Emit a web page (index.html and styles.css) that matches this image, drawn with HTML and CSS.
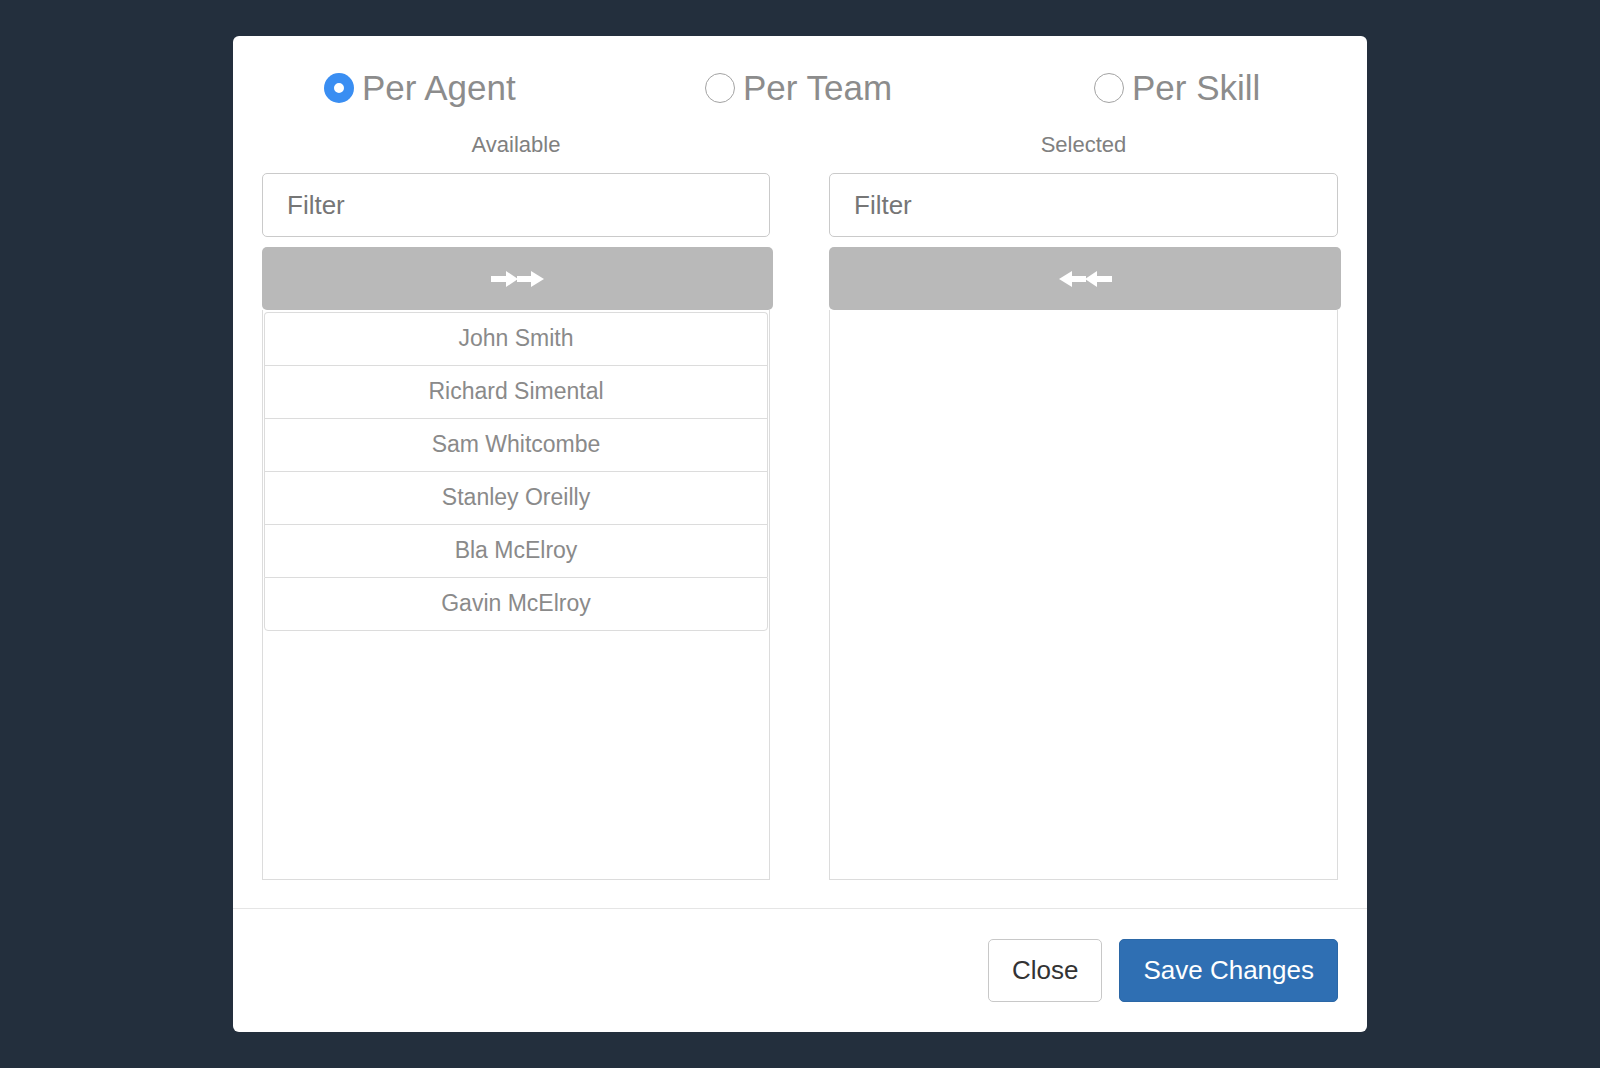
FILE: index.html
```html
<!DOCTYPE html>
<html lang="en">
<head>
    <meta charset="UTF-8">
    <meta name="viewport" content="width=device-width, initial-scale=1.0">
    <title>Assign Agents</title>
    <link rel="stylesheet" href="styles.css">
</head>
<body>
    <div class="modal">
        <div class="modal-body">
            <div class="mode-picker">
                <label class="mode">
                    <input type="radio" name="mode" value="agent" checked>
                    <span>Per Agent</span>
                </label>
                <label class="mode">
                    <input type="radio" name="mode" value="team">
                    <span>Per Team</span>
                </label>
                <label class="mode">
                    <input type="radio" name="mode" value="skill">
                    <span>Per Skill</span>
                </label>
            </div>

            <div class="dual-list">
                <div class="list-col">
                    <div class="list-title">Available</div>
                    <input type="text" class="filter" placeholder="Filter">
                    <button type="button" class="move-btn" title="Move all">
                        <svg width="54" height="18" viewBox="0 0 54 18" fill="#fff">
                            <rect x="0" y="6" width="18" height="6"/>
                            <polygon points="15,1 27,9 15,17"/>
                            <rect x="26" y="6" width="16" height="6"/>
                            <polygon points="40,1 53,9 40,17"/>
                        </svg>
                    </button>
                    <div class="list-box">
                        <ul class="list-group">
                            <li>John Smith</li>
                            <li>Richard Simental</li>
                            <li>Sam Whitcombe</li>
                            <li>Stanley Oreilly</li>
                            <li>Bla McElroy</li>
                            <li>Gavin McElroy</li>
                        </ul>
                    </div>
                </div>

                <div class="list-col">
                    <div class="list-title">Selected</div>
                    <input type="text" class="filter" placeholder="Filter">
                    <button type="button" class="move-btn" title="Remove all">
                        <svg width="54" height="18" viewBox="0 0 54 18" fill="#fff">
                            <polygon points="1,9 14,1 14,17"/>
                            <rect x="12" y="6" width="16" height="6"/>
                            <polygon points="27,9 39,1 39,17"/>
                            <rect x="36" y="6" width="18" height="6"/>
                        </svg>
                    </button>
                    <div class="list-box">
                        <ul class="list-group"></ul>
                    </div>
                </div>
            </div>
        </div>

        <div class="modal-footer">
            <button type="button" class="btn btn-default">Close</button>
            <button type="button" class="btn btn-primary">Save Changes</button>
        </div>
    </div>
</body>
</html>
```

FILE: styles.css
```css
* {
    margin: 0;
    padding: 0;
    box-sizing: border-box;
}

body {
    font-family: 'Liberation Sans', Arial, Helvetica, sans-serif;
    background: #232f3d;
    min-height: 100vh;
    padding: 36px 0 0 233px;
}

.modal {
    width: 1134px;
    height: 996px;
    background: #fff;
    border-radius: 6px;
    display: flex;
    flex-direction: column;
}

.modal-body {
    padding: 32px 29px 28px;
}

/* radio row */
.mode-picker {
    display: grid;
    grid-template-columns: 381px 389px auto;
    padding-left: 62px;
    height: 40px;
    align-items: center;
}

.mode {
    display: flex;
    align-items: center;
    gap: 8px;
    font-size: 35px;
    line-height: 40px;
    color: #8c8c8c;
    cursor: pointer;
}

.mode input {
    appearance: none;
    -webkit-appearance: none;
    width: 30px;
    height: 30px;
    border-radius: 50%;
    border: 1.5px solid #a3a3a3;
    background: #fff;
    margin: 0;
}

.mode input:checked {
    border: none;
    box-shadow: inset 0 0 0 10px #3a8ef2;
}

/* two lists */
.dual-list {
    display: grid;
    grid-template-columns: 508px 509px;
    justify-content: space-between;
    margin-top: 24px;
}

.list-title {
    text-align: center;
    font-size: 22px;
    line-height: 26px;
    color: #808080;
    margin-bottom: 15px;
}

.filter {
    display: block;
    width: 100%;
    height: 64px;
    padding: 0 24px;
    border: 1px solid #cacaca;
    border-radius: 5px;
    font-family: inherit;
    font-size: 26px;
    color: #555;
    outline: none;
}

.filter::placeholder {
    color: #767676;
}

.move-btn {
    display: flex;
    align-items: center;
    justify-content: center;
    width: calc(100% + 3px);
    height: 63px;
    margin-top: 10px;
    background: #b9b9b9;
    border: none;
    border-radius: 5px;
    cursor: pointer;
}

.list-box {
    height: 570px;
    border: 1px solid #dcdcdc;
    border-top: none;
    padding: 2px 1px;
}

.list-group {
    list-style: none;
}

.list-group li {
    height: 53px;
    line-height: 50px;
    text-align: center;
    font-size: 23px;
    color: #8a8a8a;
    border: 1px solid #dcdcdc;
    border-bottom: none;
}

.list-group li:first-child {
    border-radius: 4px 4px 0 0;
}

.list-group li:last-child {
    border-bottom: 1px solid #dcdcdc;
    border-radius: 0 0 4px 4px;
    height: 54px;
}

/* footer */
.modal-footer {
    border-top: 1px solid #e5e5e5;
    padding: 30px 29px 29px;
    display: flex;
    justify-content: flex-end;
    gap: 17px;
}

.btn {
    height: 63px;
    padding: 0 23px;
    font-family: inherit;
    font-size: 26px;
    border-radius: 5px;
    border: 1px solid transparent;
    cursor: pointer;
}

.btn-default {
    background: #fff;
    border-color: #c8c8c8;
    color: #333;
}

.btn-primary {
    background: #2f6fb3;
    border-color: #2b67a6;
    color: #fff;
}
```
